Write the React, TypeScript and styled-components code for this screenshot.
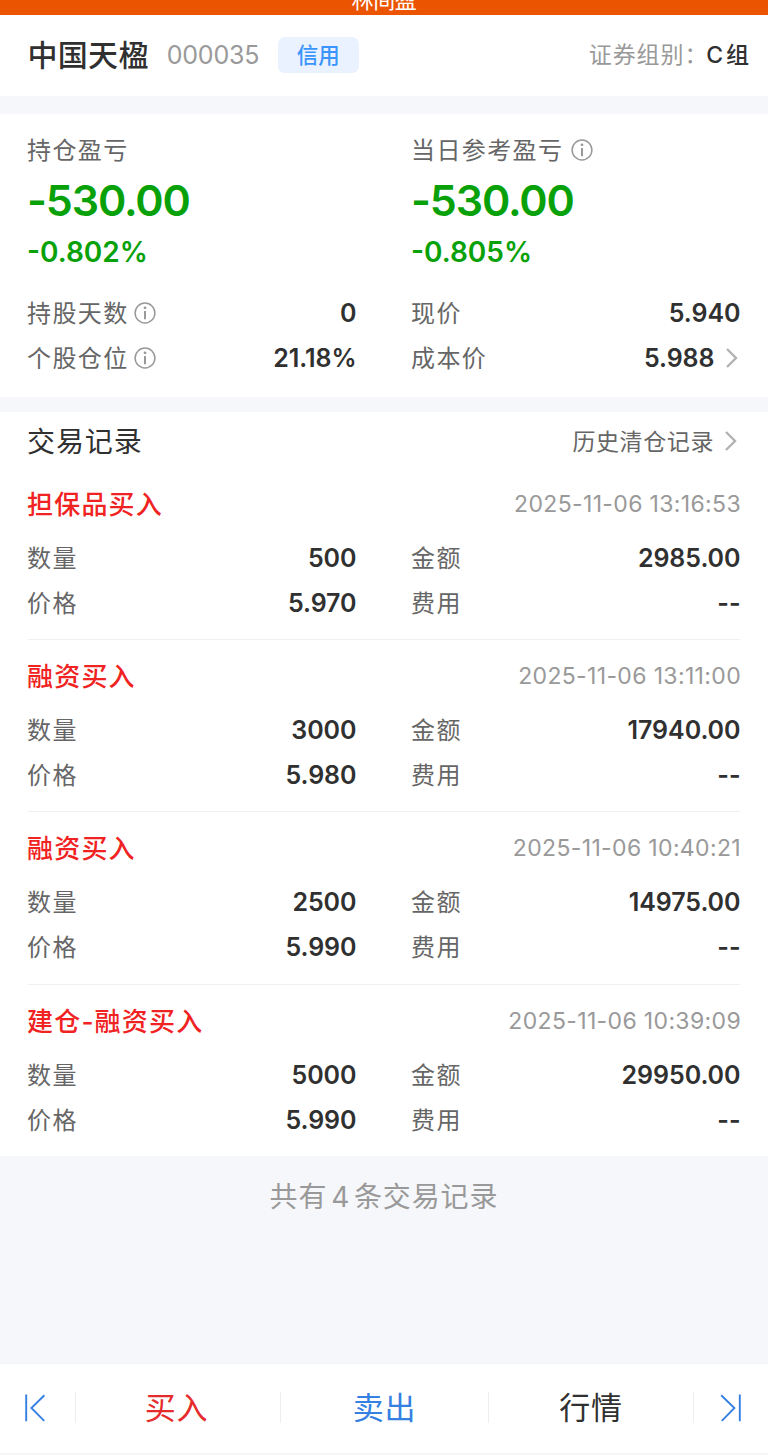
import React from 'react';
import styled, { createGlobalStyle } from 'styled-components';

const GlobalStyle = createGlobalStyle`
  * { box-sizing: border-box; }
  body {
    margin: 0;
    background: #f6f7fa;
    font-family: Inter, "Noto Sans CJK SC", sans-serif;
    color: #303030;
  }
`;

const Page = styled.div`
  width: 768px;
  height: 1455px;
  display: flex;
  flex-direction: column;
  overflow: hidden;
`;

const Banner = styled.div`
  height: 15px;
  flex: none;
  display: flex;
  justify-content: center;
  align-items: flex-end;
  overflow: hidden;
  background: #eb5502;
  color: #fff;
  font-size: 22px;
  line-height: 30px;
  letter-spacing: -0.4px;
`;

const StockBar = styled.header`
  height: 81px;
  flex: none;
  display: flex;
  align-items: center;
  padding: 0 18px 2px 28px;
  background: #fff;
`;

const StockName = styled.h1`
  margin: 0 0 0 -0.5px;
  font-size: 30px;
  font-weight: 500;
  line-height: 40px;
  letter-spacing: 0.3px;
`;

const StockCode = styled.span`
  margin-left: 18px;
  font-size: 25px;
  line-height: 40px;
  letter-spacing: -0.2px;
  color: #999;
`;

const Tag = styled.span`
  margin-left: 18.5px;
  width: 81px;
  height: 36px;
  border-radius: 7px;
  background: #e9f2fe;
  color: #3b94fb;
  font-size: 21.5px;
  font-weight: 500;
  line-height: 36px;
  text-align: center;
`;

const Group = styled.div`
  margin-left: auto;
  font-size: 23px;
  line-height: 40px;
  letter-spacing: 0.9px;
  color: #999;
  white-space: nowrap;
`;

const GroupValue = styled.span`
  margin-left: -2px;
  word-spacing: -5px;
  font-weight: 500;
  color: #303030;
`;

const Summary = styled.section`
  margin-top: 18px;
  height: 283px;
  flex: none;
  display: grid;
  grid-template-columns: 328px 328px;
  column-gap: 56px;
  align-content: start;
  padding: 14px 28px 0;
  background: #fff;
`;

const Label = styled.span`
  display: flex;
  align-items: center;
  margin-left: -1px;
  font-size: 24px;
  line-height: 45px;
  letter-spacing: 1.4px;
  color: #666;
  white-space: nowrap;
`;

const Profit = styled.div`
  margin-left: -1px;
  font-size: 43px;
  font-weight: 600;
  line-height: 54px;
  letter-spacing: -1.15px;
  color: #09a109;
`;

const Percent = styled.div`
  margin: 0 0 16px -1px;
  padding-top: 2px;
  font-size: 28px;
  font-weight: 600;
  line-height: 46px;
  color: #09a109;
`;

const Row = styled.div`
  height: 45px;
  display: flex;
  align-items: center;
  justify-content: space-between;
`;

const Value = styled.span`
  display: flex;
  align-items: center;
  margin-right: -0.5px;
  font-size: 25px;
  font-weight: 600;
  line-height: 45px;
  letter-spacing: -0.05px;
`;

const Trades = styled.section`
  margin-top: 15px;
  height: 744px;
  flex: none;
  padding: 0 28px;
  background: #fff;
`;

const TradesHeader = styled.div`
  height: 56px;
  display: flex;
  align-items: center;
  justify-content: space-between;
  padding-top: 3px;
`;

const TradesTitle = styled.h2`
  margin: 0 0 0 -1px;
  font-size: 28px;
  font-weight: 400;
  line-height: 40px;
  letter-spacing: 0.9px;
`;

const HistoryLink = styled.span`
  display: flex;
  align-items: center;
  font-size: 23px;
  line-height: 40px;
  letter-spacing: 0.6px;
  color: #666;
`;

const Record = styled.article`
  height: 172.2px;
  padding-top: 14px;

  &:not(:last-child) {
    border-bottom: 1px solid #f0f1f2;
  }
`;

const RecordHead = styled.div`
  height: 54px;
  display: flex;
  align-items: center;
  justify-content: space-between;
  padding-bottom: 9px;
`;

const Side = styled.span`
  margin-left: -1px;
  font-size: 26px;
  font-weight: 500;
  line-height: 45px;
  letter-spacing: 1.2px;
  color: #f02222;
`;

const Time = styled.time`
  margin-right: -1px;
  font-size: 23px;
  line-height: 45px;
  letter-spacing: 0.35px;
  color: #999;
`;

const Fields = styled.div`
  display: grid;
  grid-template-columns: 328px 328px;
  column-gap: 56px;
`;

const Total = styled.p`
  margin: 0;
  flex: 1;
  padding-top: 21px;
  text-align: center;
  font-size: 28px;
  line-height: 40px;
  letter-spacing: 0.9px;
  word-spacing: -5px;
  color: #999;
`;

const Footer = styled.nav`
  height: 92px;
  flex: none;
  display: grid;
  grid-template-columns: 76px 205px 208px 205px 74px;
  align-items: center;
  padding-bottom: 2px;
  background: #fff;
  border-top: 1px solid #f3f4f5;
  border-bottom: 2px solid #f5f7f7;
`;

const FooterItem = styled.div<{ $color?: string; $divider?: boolean; $inset?: number }>`
  height: 31px;
  display: flex;
  align-items: center;
  justify-content: center;
  padding-right: ${(p) => p.$inset ?? 0}px;
  font-size: 31px;
  line-height: 31px;
  letter-spacing: 0.8px;
  color: ${(p) => p.$color ?? '#303030'};
  border-right: ${(p) => (p.$divider ? '1px solid #eee' : 'none')};
`;

const InfoSvg = styled.svg<{ $gap: number }>`
  flex: none;
  margin: 0 0 2px ${(p) => p.$gap}px;
`;

const ChevronSvg = styled.svg`
  flex: none;
  margin: 0 3px 2px 10px;
`;

const Info = ({ gap = 5.5 }: { gap?: number }) => (
  <InfoSvg $gap={gap} width="22" height="22" viewBox="0 0 22 22" fill="none" stroke="#999">
    <circle cx="11" cy="11" r="9.9" strokeWidth="1.5" />
    <path d="M11 9v8.2" strokeWidth="2" />
    <circle cx="11" cy="5.8" r="1.4" fill="#999" stroke="none" />
  </InfoSvg>
);

const Chevron = () => (
  <ChevronSvg width="13" height="20" viewBox="0 0 13 20" fill="none" stroke="#b2b2b2" strokeWidth="2.4">
    <path d="M2 1l9 9-9 9" />
  </ChevronSvg>
);

const First = () => (
  <svg width="22" height="28" viewBox="0 0 22 28" fill="none" stroke="#3580e0" strokeWidth="1.9">
    <path d="M2.2 .6v26.6M20.4 1.2L7.4 14l12.8 12.8" />
  </svg>
);

const Last = () => (
  <svg width="22" height="28" viewBox="0 0 22 28" fill="none" stroke="#3580e0" strokeWidth="1.9">
    <path d="M19.8 .6v26.6M1.2 1.2L14.4 14 1.8 26.8" />
  </svg>
);

const Field = ({ name, value, info, more }: { name: string; value: string; info?: boolean; more?: boolean }) => (
  <Row>
    <Label>{name}{info && <Info />}</Label>
    <Value>{value}{more && <Chevron />}</Value>
  </Row>
);

const records = [
  { side: '担保品买入', time: '2025-11-06 13:16:53', qty: '500', amount: '2985.00', price: '5.970' },
  { side: '融资买入', time: '2025-11-06 13:11:00', qty: '3000', amount: '17940.00', price: '5.980' },
  { side: '融资买入', time: '2025-11-06 10:40:21', qty: '2500', amount: '14975.00', price: '5.990' },
  { side: '建仓-融资买入', time: '2025-11-06 10:39:09', qty: '5000', amount: '29950.00', price: '5.990' },
];

export default function App() {
  return (
    <Page>
      <GlobalStyle />
      <Banner>林间盈</Banner>
      <StockBar>
        <StockName>中国天楹</StockName>
        <StockCode>000035</StockCode>
        <Tag>信用</Tag>
        <Group>证券组别：<GroupValue>C 组</GroupValue></Group>
      </StockBar>
      <Summary>
        <div>
          <Label>持仓盈亏</Label>
          <Profit>-530.00</Profit>
          <Percent>-0.802%</Percent>
          <Field name="持股天数" value="0" info />
          <Field name="个股仓位" value="21.18%" info />
        </div>
        <div>
          <Label>当日参考盈亏<Info gap={8} /></Label>
          <Profit>-530.00</Profit>
          <Percent>-0.805%</Percent>
          <Field name="现价" value="5.940" />
          <Field name="成本价" value="5.988" more />
        </div>
      </Summary>
      <Trades>
        <TradesHeader>
          <TradesTitle>交易记录</TradesTitle>
          <HistoryLink>历史清仓记录<Chevron /></HistoryLink>
        </TradesHeader>
        {records.map((r) => (
          <Record key={r.time}>
            <RecordHead>
              <Side>{r.side}</Side>
              <Time>{r.time}</Time>
            </RecordHead>
            <Fields>
              <Field name="数量" value={r.qty} />
              <Field name="金额" value={r.amount} />
              <Field name="价格" value={r.price} />
              <Field name="费用" value="--" />
            </Fields>
          </Record>
        ))}
      </Trades>
      <Total>共有 4 条交易记录</Total>
      <Footer>
        <FooterItem $divider $inset={5}><First /></FooterItem>
        <FooterItem $divider $color="#e52b2b" $inset={3}>买入</FooterItem>
        <FooterItem $divider $color="#3580e0">卖出</FooterItem>
        <FooterItem $divider>行情</FooterItem>
        <FooterItem><Last /></FooterItem>
      </Footer>
    </Page>
  );
}
